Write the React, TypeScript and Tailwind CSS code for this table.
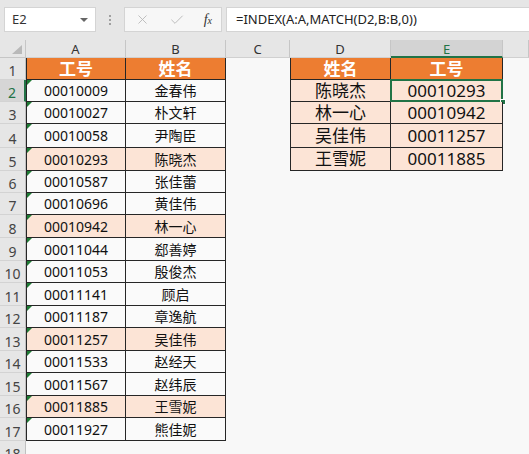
import { X, Check } from 'lucide-react';

const FONT = "font-['Noto_Sans','Noto_Sans_CJK_SC',sans-serif]";

// row heights, rows 1..18
const HEIGHTS = [
  'h-[22px]', 'h-[22px]', 'h-[22px]', 'h-[24px]', 'h-[23px]', 'h-[22px]', 'h-[22px]', 'h-[23px]', 'h-[23px]',
  'h-[22px]', 'h-[23px]', 'h-[22px]', 'h-[23px]', 'h-[22px]', 'h-[23px]', 'h-[22px]', 'h-[23px]', 'h-[22px]',
];

const LEFT: [string, string, boolean][] = [
  ['00010009', '金春伟', false],
  ['00010027', '朴文轩', false],
  ['00010058', '尹陶臣', false],
  ['00010293', '陈晓杰', true],
  ['00010587', '张佳蕾', false],
  ['00010696', '黄佳伟', false],
  ['00010942', '林一心', true],
  ['00011044', '郄善婷', false],
  ['00011053', '殷俊杰', false],
  ['00011141', '顾启', false],
  ['00011187', '章逸航', false],
  ['00011257', '吴佳伟', true],
  ['00011533', '赵经天', false],
  ['00011567', '赵纬辰', false],
  ['00011885', '王雪妮', true],
  ['00011927', '熊佳妮', false],
];

const RIGHT: [string, string][] = [
  ['陈晓杰', '00010293'],
  ['林一心', '00010942'],
  ['吴佳伟', '00011257'],
  ['王雪妮', '00011885'],
];

function ColHead({ w, label, sel }: { w: string; label: string; sel?: boolean }) {
  return (
    <div className={`${w} shrink-0 h-full flex items-center justify-center text-[13px] leading-none border-r border-[#c6c6c6] ${
      sel ? 'bg-[#d3d3d3] text-[#217346] border-b-2 border-b-[#217346]' : 'bg-[#e6e6e6] text-[#333] border-b border-b-[#d0d0d0]'
    }`}>
      <span className="pt-[2px]">{label}</span>
    </div>
  );
}

function Row({ r }: { r: number }) {
  const h = HEIGHTS[r - 1];
  const left = r >= 2 && r <= 17 ? LEFT[r - 2] : null;
  const right = r >= 2 && r <= 5 ? RIGHT[r - 2] : null;
  const sel = r === 2;

  return (
    <div className={`flex ${h}`}>
      {/* row number */}
      <div className={`w-[26px] shrink-0 flex items-end justify-center pb-[1px] text-[14px] leading-none border-b border-[#d3d3d3] ${
        sel ? 'bg-[#d6d6d6] text-[#217346] border-r-2 border-r-[#217346]' : 'bg-[#e6e6e6] text-[#444] border-r border-r-[#c0c0c0]'
      }`}>
        {r}
      </div>

      {/* A / B */}
      {r === 1 && (
        <>
          <div className="w-[100px] shrink-0 bg-[#ed7d31] text-white font-bold text-[17px] flex items-center justify-center border-x border-b border-[#262626]">工号</div>
          <div className="w-[100px] shrink-0 bg-[#ed7d31] text-white font-bold text-[17px] flex items-center justify-center border-r border-b border-[#262626]">姓名</div>
        </>
      )}
      {left && (
        <>
          <div className={`relative w-[100px] shrink-0 text-[14px] text-[#111] flex items-center justify-center border-x border-b border-[#262626] ${left[2] ? 'bg-[#fce4d6]' : 'bg-[#fafafa]'}`}>
            <div className="absolute left-0 top-0 w-0 h-0 border-t-[5px] border-r-[5px] border-t-[#1e7b34] border-r-transparent" />
            {left[0]}
          </div>
          <div className={`w-[100px] shrink-0 text-[14px] text-[#111] flex items-center justify-center border-r border-b border-[#262626] ${left[2] ? 'bg-[#fce4d6]' : 'bg-[#fafafa]'}`}>
            {left[1]}
          </div>
        </>
      )}
      {r === 18 && <div className="w-[200px] shrink-0" />}

      {/* C */}
      <div className="w-[64px] shrink-0" />

      {/* D / E */}
      {r === 1 && (
        <>
          <div className="w-[101px] shrink-0 bg-[#ed7d31] text-white font-bold text-[17px] flex items-center justify-center border-x border-b border-[#262626]">姓名</div>
          <div className="w-[112px] shrink-0 bg-[#ed7d31] text-white font-bold text-[17px] flex items-center justify-center border-r border-b border-[#262626]">工号</div>
        </>
      )}
      {right && (
        <>
          <div className="w-[101px] shrink-0 bg-[#fce4d6] text-[17px] text-[#111] flex items-center justify-center border-x border-b border-[#262626]">
            {right[0]}
          </div>
          <div className="relative w-[112px] shrink-0 bg-[#fce4d6] text-[17px] text-[#111] flex items-center justify-center border-r border-b border-[#262626]">
            {right[1]}
            {sel && (
              <>
                <div className="absolute -left-px -top-px -right-px -bottom-px border-2 border-[#217346]" />
                <div className="absolute -right-[4px] -bottom-[4px] w-[6px] h-[6px] bg-[#217346] border border-white" />
              </>
            )}
          </div>
        </>
      )}
    </div>
  );
}

export default function App() {
  return (
    <div className={`w-[529px] h-[454px] overflow-hidden bg-[#f8f8f8] ${FONT}`}>
      {/* formula bar */}
      <div className="h-[40px] bg-[#e6e6e6] flex items-start pt-[7px] pl-[4px]">
        <div className="w-[92px] h-[25px] shrink-0 bg-white border border-[#d4d4d4] flex items-center justify-between pl-[7px] pr-[7px] text-[13px] text-[#333]">
          E2
          <div className="w-0 h-0 border-t-[4px] border-x-[4px] border-x-transparent border-t-[#666]" />
        </div>
        <div className="w-[28px] h-[25px] shrink-0 flex flex-col items-center justify-center gap-[2px]">
          <div className="w-[2px] h-[2px] bg-[#a0a0a0]" />
          <div className="w-[2px] h-[2px] bg-[#a0a0a0]" />
          <div className="w-[2px] h-[2px] bg-[#a0a0a0]" />
        </div>
        <div className="w-[98px] h-[25px] shrink-0 bg-[#f7f7f7] border border-[#d4d4d4] flex items-center justify-between pl-[10px] pr-[9px]">
          <X size={15} strokeWidth={1.4} color="#b8b8b8" />
          <Check size={16} strokeWidth={1.4} color="#b8b8b8" />
          <span className="font-['Liberation_Serif',serif] italic text-[14px] text-[#333] leading-none">
            f<span className="text-[10px]">x</span>
          </span>
        </div>
        <div className="ml-[4px] w-[320px] h-[25px] shrink-0 bg-white border border-[#d4d4d4] flex items-center pl-[9px] text-[13px] text-[#222]">
          =INDEX(A:A,MATCH(D2,B:B,0))
        </div>
      </div>

      {/* column headers */}
      <div className="flex h-[18px]">
        <div className="relative w-[26px] shrink-0 h-full bg-[#e6e6e6] border-r border-b border-[#c6c6c6]">
          <div className="absolute right-[3px] bottom-[3px] w-0 h-0 border-l-[10px] border-l-transparent border-b-[9px] border-b-[#b9b9b9]" />
        </div>
        <ColHead w="w-[100px]" label="A" />
        <ColHead w="w-[100px]" label="B" />
        <ColHead w="w-[64px]" label="C" />
        <ColHead w="w-[101px]" label="D" />
        <ColHead w="w-[112px]" label="E" sel />
        <ColHead w="w-[26px]" label="" />
      </div>

      {Array.from({ length: 18 }, (_, i) => (
        <Row key={i} r={i + 1} />
      ))}
    </div>
  );
}
